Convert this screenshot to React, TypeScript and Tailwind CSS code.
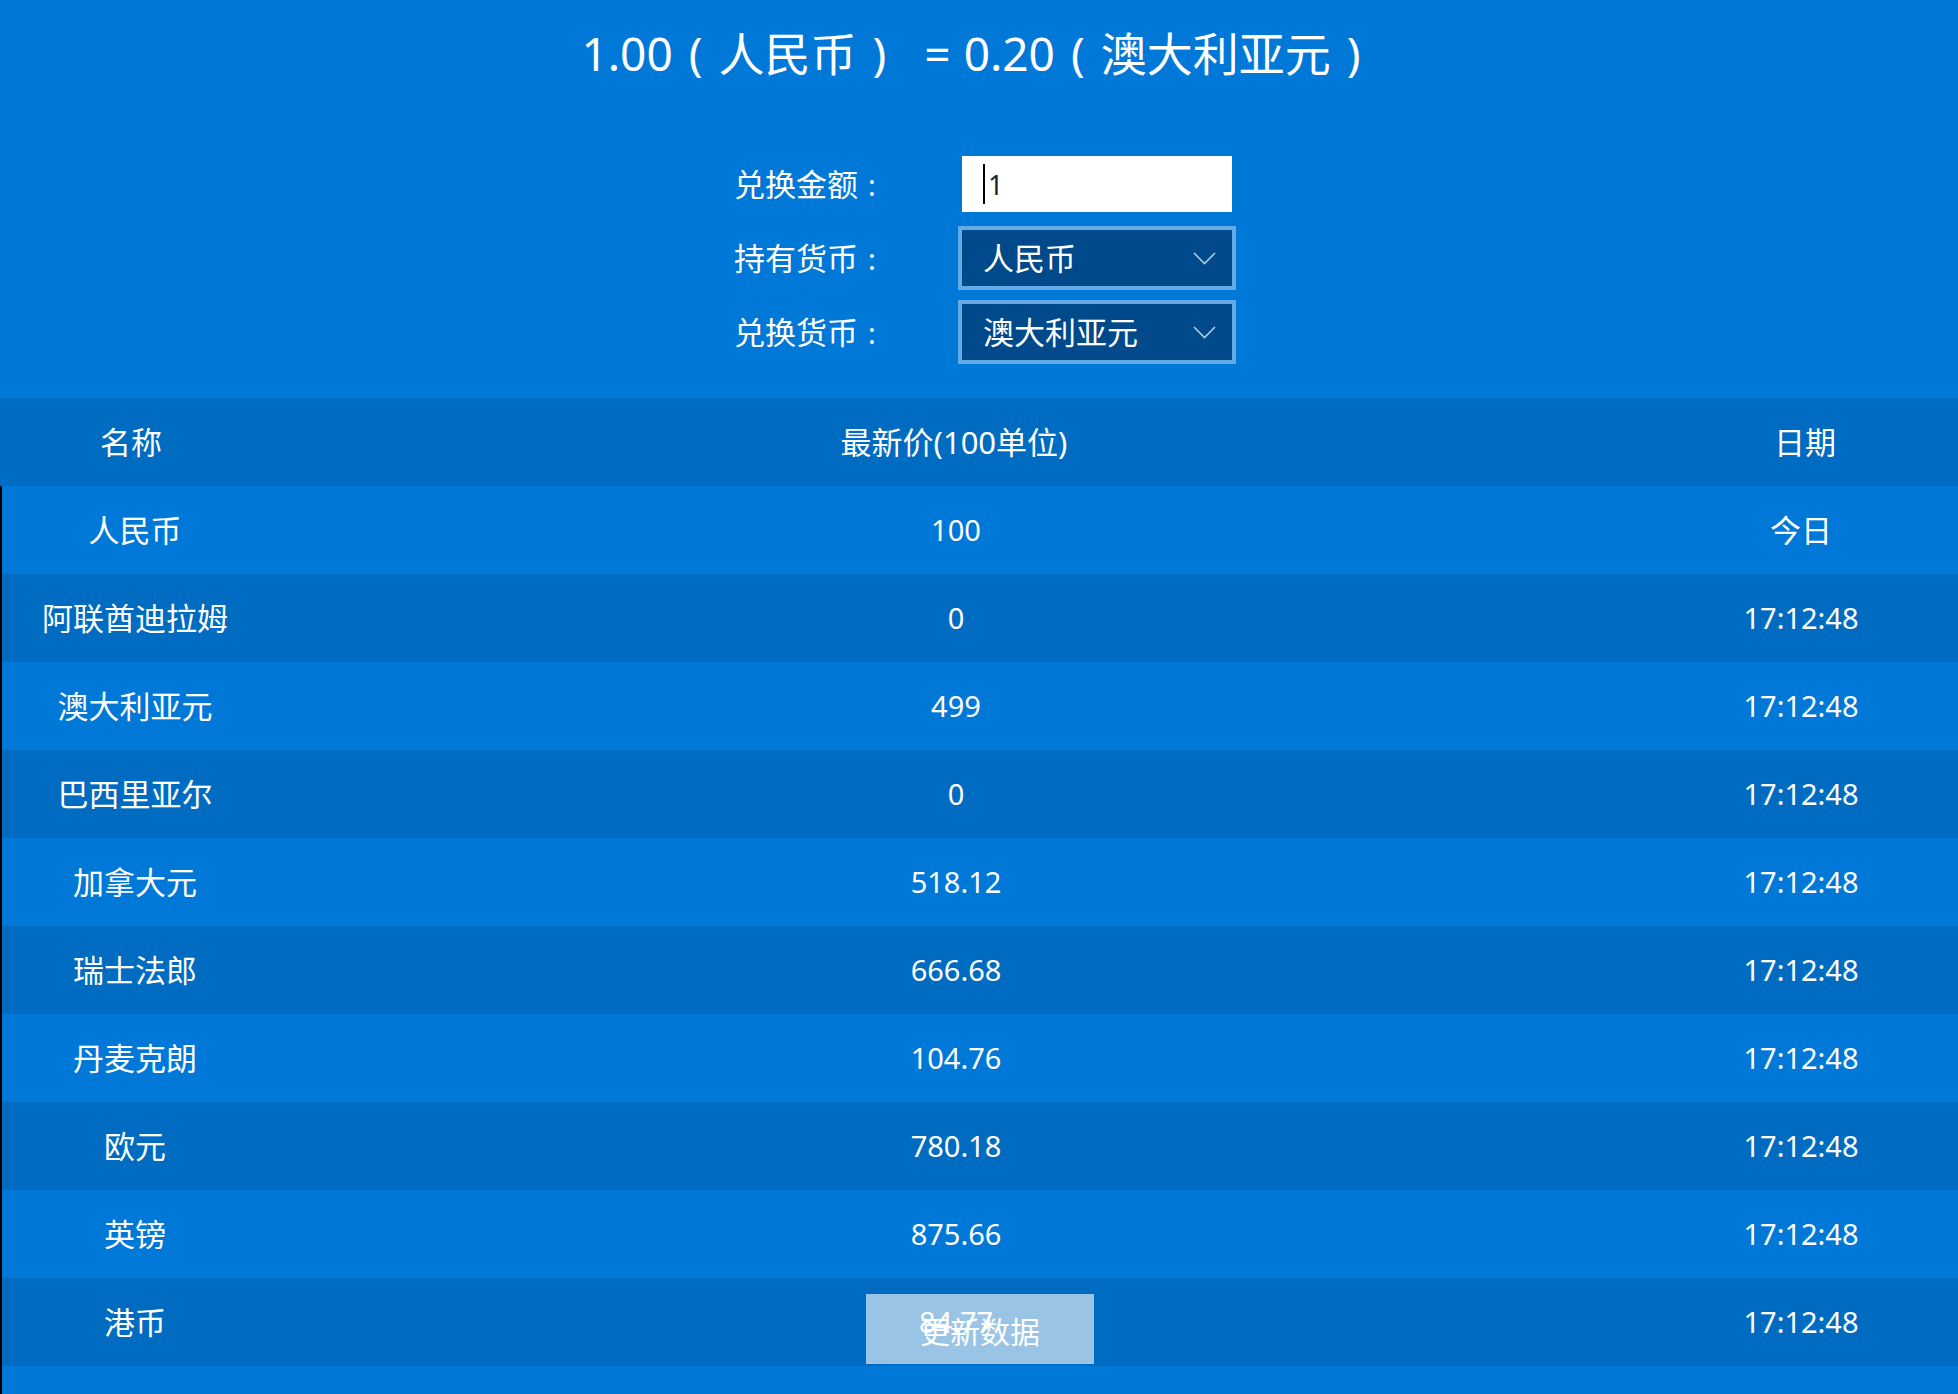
import React from "react";

type Rate = {
  name: string;
  price: string;
  date: string;
};

const rates: Rate[] = [
  { name: "人民币", price: "100", date: "今日" },
  { name: "阿联酋迪拉姆", price: "0", date: "17:12:48" },
  { name: "澳大利亚元", price: "499", date: "17:12:48" },
  { name: "巴西里亚尔", price: "0", date: "17:12:48" },
  { name: "加拿大元", price: "518.12", date: "17:12:48" },
  { name: "瑞士法郎", price: "666.68", date: "17:12:48" },
  { name: "丹麦克朗", price: "104.76", date: "17:12:48" },
  { name: "欧元", price: "780.18", date: "17:12:48" },
  { name: "英镑", price: "875.66", date: "17:12:48" },
  { name: "港币", price: "84.77", date: "17:12:48" },
];

const Chevron = () => (
  <svg width="23" height="13" viewBox="0 0 23 13" fill="none" aria-hidden="true">
    <polyline points="1,1 11.5,11.5 22,1" stroke="#a8cbee" strokeWidth="1.6" />
  </svg>
);

const Select: React.FC<{ value: string }> = ({ value }) => (
  <div className="flex h-[64px] w-[278px] items-center justify-between border-[4px] border-[#62abe6] bg-[#00498a] pl-[21px] pr-[16px]">
    <span className="text-[31px] leading-none">{value}</span>
    <Chevron />
  </div>
);

const FormRow: React.FC<{ label: string; className?: string; children: React.ReactNode }> = ({
  label,
  className = "",
  children,
}) => (
  <div className={`flex items-center ${className}`}>
    <div className="flex w-[224px] items-center text-[31px] leading-none">
      {label}
      <span className="ml-[10px] text-[29px]">:</span>
    </div>
    {children}
  </div>
);

// parens spaced the way the original font draws them
const P: React.FC<{ children: React.ReactNode }> = ({ children }) => <span className="mx-[16px]">{children}</span>;

export default function App() {
  return (
    <div className="relative flex h-[1394px] w-full flex-col overflow-hidden bg-[#0078d7] font-['Noto_Sans','Noto_Sans_CJK_SC',sans-serif] text-white">
      {/* converter */}
      <section className="h-[398px] shrink-0">
        <h1 className="pt-[20px] text-center text-[46px] font-normal leading-[66px]">
          1.00<P>(</P>人民币<P>)</P>
          <span className="ml-[22px] mr-[13px]">=</span>0.20<P>(</P>澳大利亚元<P>)</P>
        </h1>
        <div className="mt-[70px] flex justify-center">
          <div className="ml-[12px] flex flex-col">
            <FormRow label="兑换金额" className="h-[56px]">
              <div className="ml-[4px] flex h-[56px] w-[270px] items-center bg-white pl-[21px]">
                <span className="h-[40px] w-[2px] bg-black" />
                <span className="ml-[3px] text-[27px] leading-none text-[#222]">1</span>
              </div>
            </FormRow>
            <FormRow label="持有货币" className="mt-[14px]">
              <Select value="人民币" />
            </FormRow>
            <FormRow label="兑换货币" className="mt-[10px]">
              <Select value="澳大利亚元" />
            </FormRow>
          </div>
        </div>
      </section>

      {/* table header */}
      <div className="grid h-[88px] shrink-0 grid-cols-[268px_1376px_1fr] items-center bg-[#006cc1] text-[31px]">
        <div className="pr-[6px] text-center">名称</div>
        <div className="pr-[4px] text-center">最新价(100单位)</div>
        <div className="pl-[8px] text-center">日期</div>
      </div>

      {/* table rows */}
      <div className="flex-1 border-l-2 border-black">
        {rates.map((rate, i) => (
          <div
            key={rate.name}
            className={`grid h-[88px] grid-cols-[266px_1376px_1fr] items-center text-[29px] ${
              i % 2 === 0 ? "bg-[#0078d7]" : "bg-[#006cc1]"
            }`}
          >
            <div className="text-center text-[31px]">{rate.name}</div>
            <div className="text-center">{rate.price}</div>
            <div className={`text-center ${rate.date === "今日" ? "text-[31px]" : ""}`}>{rate.date}</div>
          </div>
        ))}
      </div>

      <button
        type="button"
        className="absolute left-[866px] top-[1294px] flex h-[70px] w-[228px] items-center justify-center bg-white/60 pt-[6px] text-[30px] leading-none text-white"
      >
        更新数据
      </button>
    </div>
  );
}
